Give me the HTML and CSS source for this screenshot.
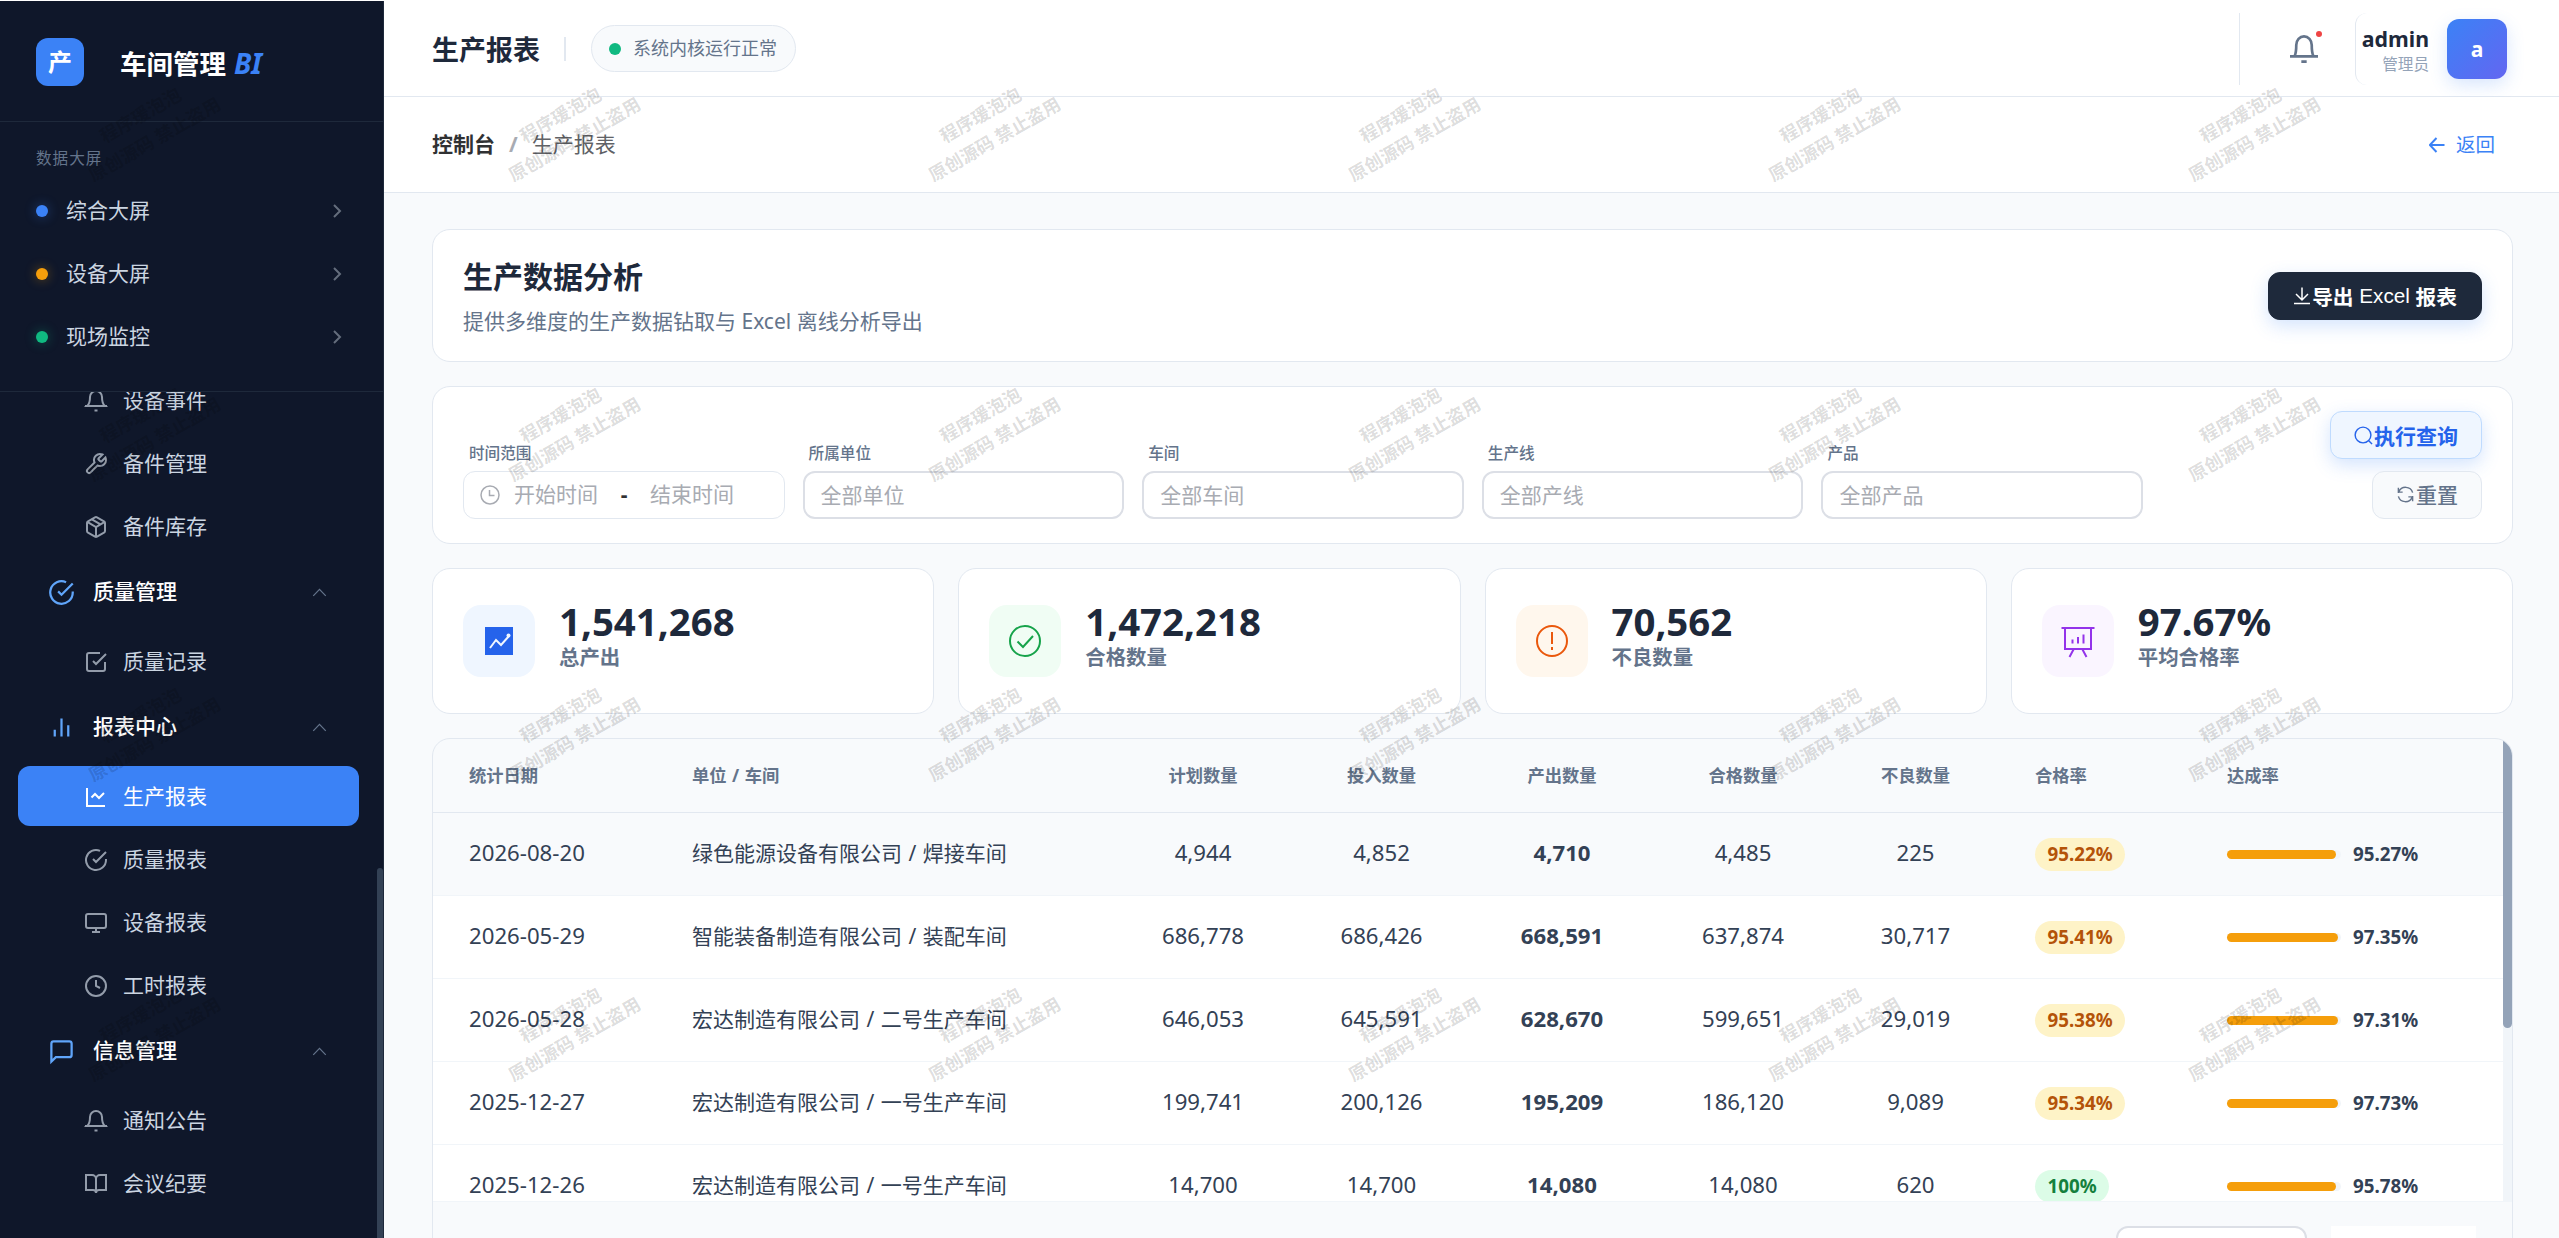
FILE: index.html
```html
<!DOCTYPE html>
<html lang="zh-CN">
<head>
    <meta charset="UTF-8">
    <meta name="viewport" content="width=device-width, initial-scale=1.0">
    <title>生产报表 - 车间管理 BI</title>
    <link rel="stylesheet" href="styles.css">
</head>
<body>
    <!-- icon sprite -->
    <svg class="sprite" width="0" height="0">
        <symbol id="i-bell" viewBox="0 0 24 24"><path d="M18 8A6 6 0 0 0 6 8c0 7-3 9-3 9h18s-3-2-3-9"/><path d="M1 17h22M10.500 21.500h3"/></symbol>
        <symbol id="i-bell2" viewBox="0 0 24 24"><path d="M1.500 17.500h21M5 17.200c1.200-2.500 1.200-5 1.200-8.200a5.800 6.500 0 0 1 11.600 0c0 3.200 0 5.700 1.200 8.200M10 21.500h4"/></symbol>
        <symbol id="i-wrench" viewBox="0 0 24 24"><path d="M14.7 6.300a1 1 0 0 0 0 1.400l1.600 1.600a1 1 0 0 0 1.400 0l3.770-3.770a6 6 0 0 1-7.940 7.940l-6.910 6.910a2.120 2.120 0 0 1-3-3l6.910-6.910a6 6 0 0 1 7.940-7.940l-3.760 3.760z"/></symbol>
        <symbol id="i-box" viewBox="0 0 24 24"><path d="M21 16V8a2 2 0 0 0-1-1.730l-7-4a2 2 0 0 0-2 0l-7 4A2 2 0 0 0 3 8v8a2 2 0 0 0 1 1.730l7 4a2 2 0 0 0 2 0l7-4A2 2 0 0 0 21 16z"/><path d="M16.500 9.400l-9-5.190M3.270 6.960L12 12.010l8.730-5.050M12 22.080V12"/></symbol>
        <symbol id="i-check-circle" viewBox="0 0 24 24"><path d="M22 11.080V12a10 10 0 1 1-5.930-9.140"/><path d="M22 4L12 14.010l-3-3"/></symbol>
        <symbol id="i-check-square" viewBox="0 0 24 24"><path d="M9 11l3 3L22 4"/><path d="M21 12v7a2 2 0 0 1-2 2H5a2 2 0 0 1-2-2V5a2 2 0 0 1 2-2h11"/></symbol>
        <symbol id="i-bars" viewBox="0 0 24 24"><path d="M18 20V10M12 20V4M6 20v-6"/></symbol>
        <symbol id="i-line" viewBox="0 0 24 24"><path d="M3 3v18h18"/><path d="M7.500 12.500l3.500-3.500 4 4 5-5"/></symbol>
        <symbol id="i-monitor" viewBox="0 0 24 24"><rect x="2" y="3" width="20" height="14" rx="2"/><path d="M8 21h8M12 17v4"/></symbol>
        <symbol id="i-clock" viewBox="0 0 24 24"><circle cx="12" cy="12" r="10"/><path d="M12 6v6l4 2"/></symbol>
        <symbol id="i-message" viewBox="0 0 24 24"><path d="M21 15a2 2 0 0 1-2 2H7l-4 4V5a2 2 0 0 1 2-2h14a2 2 0 0 1 2 2z"/></symbol>
        <symbol id="i-book" viewBox="0 0 24 24"><path d="M2 3h6a4 4 0 0 1 4 4v14a3 3 0 0 0-3-3H2zM22 3h-6a4 4 0 0 0-4 4v14a3 3 0 0 1 3-3h7z"/></symbol>
        <symbol id="i-up" viewBox="0 0 24 24"><path d="M2 17.500L12 7l10 10.500"/></symbol>
        <symbol id="i-right" viewBox="0 0 24 24"><path d="M9 18l6-6-6-6"/></symbol>
    </svg>

    <div class="layout">
        <aside class="sidebar">
            <div class="brand">
                <div class="brand-logo">产</div>
                <div class="brand-name">车间管理 <em>BI</em></div>
            </div>
            <div class="screens">
                <div class="screens-label">数据大屏</div>
                <a class="screen-item"><i class="dot blue"></i>综合大屏<svg class="icon arrow"><use href="#i-right"/></svg></a>
                <a class="screen-item"><i class="dot orange"></i>设备大屏<svg class="icon arrow"><use href="#i-right"/></svg></a>
                <a class="screen-item"><i class="dot green"></i>现场监控<svg class="icon arrow"><use href="#i-right"/></svg></a>
            </div>
            <nav class="menu">
                <div class="menu-list">
                    <a class="menu-item"><svg class="icon"><use href="#i-bell"/></svg>设备事件</a>
                    <a class="menu-item"><svg class="icon"><use href="#i-wrench"/></svg>备件管理</a>
                    <a class="menu-item"><svg class="icon"><use href="#i-box"/></svg>备件库存</a>
                    <div class="menu-group"><svg class="icon"><use href="#i-check-circle"/></svg>质量管理<svg class="icon up"><use href="#i-up"/></svg></div>
                    <a class="menu-item"><svg class="icon"><use href="#i-check-square"/></svg>质量记录</a>
                    <div class="menu-group"><svg class="icon"><use href="#i-bars"/></svg>报表中心<svg class="icon up"><use href="#i-up"/></svg></div>
                    <a class="menu-item active"><svg class="icon"><use href="#i-line"/></svg>生产报表</a>
                    <a class="menu-item"><svg class="icon"><use href="#i-check-circle"/></svg>质量报表</a>
                    <a class="menu-item"><svg class="icon"><use href="#i-monitor"/></svg>设备报表</a>
                    <a class="menu-item"><svg class="icon"><use href="#i-clock"/></svg>工时报表</a>
                    <div class="menu-group"><svg class="icon"><use href="#i-message"/></svg>信息管理<svg class="icon up"><use href="#i-up"/></svg></div>
                    <a class="menu-item"><svg class="icon"><use href="#i-bell"/></svg>通知公告</a>
                    <a class="menu-item"><svg class="icon"><use href="#i-book"/></svg>会议纪要</a>
                </div>
                <div class="menu-scroll"></div>
            </nav>
        </aside>

        <main class="main">
            <header class="header">
                <h1 class="header-title">生产报表</h1>
                <span class="header-line"></span>
                <div class="status"><i class="status-dot"></i>系统内核运行正常</div>
                <div class="header-right">
                    <div class="notice">
                        <svg class="icon"><use href="#i-bell2"/></svg>
                        <i class="notice-dot"></i>
                    </div>
                    <div class="user">
                        <div class="user-info">
                            <div class="user-name">admin</div>
                            <div class="user-role">管理员</div>
                        </div>
                        <div class="avatar">a</div>
                    </div>
                </div>
            </header>

            <div class="crumbs">
                <b>控制台</b><span class="slash">/</span><span class="current">生产报表</span>
                <a class="back">
                    <svg class="icon" viewBox="0 0 16 16"><path d="M15.500 8H1M7.500 1L.8 8l6.700 7"/></svg>返回
                </a>
            </div>

            <div class="content">
                <section class="card intro">
                    <div>
                        <h2>生产数据分析</h2>
                        <p>提供多维度的生产数据钻取与 Excel 离线分析导出</p>
                    </div>
                    <button class="btn btn-dark">
                        <svg class="icon" viewBox="0 0 18 18"><path d="M9 1v12M3 7.500l6 6 6-6M1 17h16"/></svg>导出&nbsp;<span>Excel</span>&nbsp;报表
                    </button>
                </section>

                <section class="card filters">
                    <div class="fields">
                        <div class="field">
                            <label>时间范围</label>
                            <div class="control range">
                                <svg class="icon" viewBox="0 0 20 20"><circle cx="10" cy="10" r="9"/><path d="M9.500 5v5.500h5"/></svg>
                                <span>开始时间</span><b>-</b><span>结束时间</span>
                            </div>
                        </div>
                        <div class="field">
                            <label>所属单位</label>
                            <div class="control select">全部单位</div>
                        </div>
                        <div class="field">
                            <label>车间</label>
                            <div class="control select">全部车间</div>
                        </div>
                        <div class="field">
                            <label>生产线</label>
                            <div class="control select">全部产线</div>
                        </div>
                        <div class="field">
                            <label>产品</label>
                            <div class="control select">全部产品</div>
                        </div>
                    </div>
                    <div class="actions">
                        <button class="btn btn-query"><svg class="icon" viewBox="0 0 20 20"><circle cx="9.500" cy="9.500" r="8.300"/><path d="M15.500 15.500l3.500 3.500"/></svg>执行查询</button>
                        <button class="btn btn-reset"><svg class="icon" viewBox="0 0 20 20"><path d="M2.500 8.500V3M2.500 7.500H7M3 7.200A7.700 7.700 0 0 1 17.500 8M17.500 11.500V17M17.500 12.500H13M17 12.800A7.700 7.700 0 0 1 2.500 12"/></svg>重置</button>
                    </div>
                </section>

                <section class="stats">
                    <div class="card stat">
                        <div class="stat-icon blue"><svg class="icon" viewBox="0 0 36 36"><rect class="solid" x="4" y="4" width="28" height="28"/><path class="white" d="M9 25l6-8 5 5 8-9"/><circle class="dot-white" cx="27.500" cy="12.500" r="2"/></svg></div>
                        <div class="stat-text"><div class="stat-value">1,541,268</div><div class="stat-label">总产出</div></div>
                    </div>
                    <div class="card stat">
                        <div class="stat-icon green"><svg class="icon" viewBox="0 0 36 36"><circle cx="18" cy="18" r="15"/><path d="M10.500 18.500l5.500 5.500 10-11"/></svg></div>
                        <div class="stat-text"><div class="stat-value">1,472,218</div><div class="stat-label">合格数量</div></div>
                    </div>
                    <div class="card stat">
                        <div class="stat-icon orange"><svg class="icon" viewBox="0 0 36 36"><circle cx="18" cy="18" r="15"/><path d="M18 9v12M18 24v3"/></svg></div>
                        <div class="stat-text"><div class="stat-value">70,562</div><div class="stat-label">不良数量</div></div>
                    </div>
                    <div class="card stat">
                        <div class="stat-icon purple"><svg class="icon" viewBox="0 0 36 36"><path d="M1.500 5h33M5 5v21h26V5M13.500 26.500l-4 7.500M22.500 26.500l4 7.500M12.500 16.500v4M18 14v6.500M23.500 11.500v9"/></svg></div>
                        <div class="stat-text"><div class="stat-value">97.67%</div><div class="stat-label">平均合格率</div></div>
                    </div>
                </section>

                <section class="card report">
                    <div class="report-body">
                        <table>
                            <colgroup>
                                <col class="c-date"><col class="c-unit"><col class="c-plan"><col class="c-input"><col class="c-output"><col class="c-pass"><col class="c-bad"><col class="c-rate"><col>
                            </colgroup>
                            <thead>
                                <tr><th>统计日期</th><th>单位 / 车间</th><th class="num">计划数量</th><th class="num">投入数量</th><th class="num">产出数量</th><th class="num">合格数量</th><th class="num">不良数量</th><th>合格率</th><th>达成率</th></tr>
                            </thead>
                            <tbody>
                                <tr class="hover">
                                    <td class="date">2026-08-20</td><td>绿色能源设备有限公司 / 焊接车间</td>
                                    <td class="num">4,944</td><td class="num">4,852</td><td class="num strong">4,710</td><td class="num">4,485</td><td class="num">225</td>
                                    <td><span class="badge warn">95.22%</span></td>
                                    <td><div class="progress"><div class="track"><i style="width: 95.27%"></i></div>95.27%</div></td>
                                </tr>
                                <tr>
                                    <td class="date">2026-05-29</td><td>智能装备制造有限公司 / 装配车间</td>
                                    <td class="num">686,778</td><td class="num">686,426</td><td class="num strong">668,591</td><td class="num">637,874</td><td class="num">30,717</td>
                                    <td><span class="badge warn">95.41%</span></td>
                                    <td><div class="progress"><div class="track"><i style="width: 97.35%"></i></div>97.35%</div></td>
                                </tr>
                                <tr>
                                    <td class="date">2026-05-28</td><td>宏达制造有限公司 / 二号生产车间</td>
                                    <td class="num">646,053</td><td class="num">645,591</td><td class="num strong">628,670</td><td class="num">599,651</td><td class="num">29,019</td>
                                    <td><span class="badge warn">95.38%</span></td>
                                    <td><div class="progress"><div class="track"><i style="width: 97.31%"></i></div>97.31%</div></td>
                                </tr>
                                <tr>
                                    <td class="date">2025-12-27</td><td>宏达制造有限公司 / 一号生产车间</td>
                                    <td class="num">199,741</td><td class="num">200,126</td><td class="num strong">195,209</td><td class="num">186,120</td><td class="num">9,089</td>
                                    <td><span class="badge warn">95.34%</span></td>
                                    <td><div class="progress"><div class="track"><i style="width: 97.73%"></i></div>97.73%</div></td>
                                </tr>
                                <tr>
                                    <td class="date">2025-12-26</td><td>宏达制造有限公司 / 一号生产车间</td>
                                    <td class="num">14,700</td><td class="num">14,700</td><td class="num strong">14,080</td><td class="num">14,080</td><td class="num">620</td>
                                    <td><span class="badge ok">100%</span></td>
                                    <td><div class="progress"><div class="track"><i style="width: 95.78%"></i></div>95.78%</div></td>
                                </tr>
                            </tbody>
                        </table>
                        <div class="report-scroll"><i></i></div>
                    </div>
                    <div class="pager">
                        <div class="page-size"></div>
                        <div class="page-nav"></div>
                    </div>
                </section>
            </div>
        </main>
    </div>

    <div class="watermark" id="watermark"></div>

    <script>
        const layer = document.getElementById('watermark');
        for (let i = 0; i < 24; i++) {
            const cell = document.createElement('div');
            cell.className = 'watermark-cell';
            cell.innerHTML = '<p>程序瑗泡泡<br>原创源码 禁止盗用</p>';
            layer.appendChild(cell);
        }
    </script>
</body>
</html>
```
FILE: styles.css
```css
* {
    box-sizing: border-box;
}
body {
    margin: 0;
    padding-top: 1px;
    height: 1238px;
    overflow: hidden;
    position: relative;
    background: #fff;
    font-family: "Noto Sans", "Noto Sans CJK SC", sans-serif;
    font-size: 21px;
    line-height: 1.5;
    color: #334155;
}
h1, h2, p {
    margin: 0;
}
.sprite {
    position: absolute;
}
.icon {
    fill: none;
    stroke: currentColor;
    stroke-width: 2;
    flex-shrink: 0;
}
.layout {
    display: flex;
    height: 1237px;
}

/* sidebar */
.sidebar {
    width: 384px;
    flex-shrink: 0;
    display: flex;
    flex-direction: column;
    background: #0f172a;
    border-right: 1px solid #1e293b;
}
.brand {
    height: 121px;
    padding: 1px 36px 0;
    display: flex;
    align-items: center;
    gap: 36px;
    border-bottom: 1px solid #1e293b;
}
.brand-logo {
    width: 48px;
    height: 48px;
    border-radius: 12px;
    background: #3b82f6;
    color: #fff;
    font-size: 24px;
    font-weight: 700;
    text-align: center;
    line-height: 48px;
}
.brand-name {
    padding-top: 3px;
    color: #fff;
    font-size: 26.500px;
    font-weight: 700;
    white-space: nowrap;
}
.brand-name em {
    margin-left: 1px;
    font-size: 28px;
    color: #3b82f6;
}
.screens {
    height: 270px;
    padding-top: 24px;
    border-bottom: 1px solid #1e293b;
}
.screens-label {
    height: 33px;
    padding-left: 36px;
    font-size: 15.600px;
    line-height: 25px;
    letter-spacing: 1px;
    color: #64748b;
}
.screen-item {
    height: 63px;
    padding: 1px 34px 0 36px;
    display: flex;
    align-items: center;
    color: #cbd5e1;
}
.screen-item .arrow {
    width: 24px;
    height: 24px;
    margin-left: auto;
    opacity: .45;
}
.dot {
    width: 12px;
    height: 12px;
    border-radius: 50%;
    margin-right: 18px;
}
.dot.blue {
    background: #3b82f6;
    box-shadow: 0 0 12px rgba(59, 130, 246, .4);
}
.dot.orange {
    background: #f59e0b;
    box-shadow: 0 0 12px rgba(245, 158, 11, .4);
}
.dot.green {
    background: #10b981;
    box-shadow: 0 0 12px rgba(16, 185, 129, .4);
}
.menu {
    flex: 1;
    min-height: 0;
    overflow: hidden;
    display: flex;
    justify-content: space-between;
}
.menu-list {
    width: 359px;
    margin-top: -22px;
    padding-left: 18px;
}
.menu-item {
    height: 60px;
    margin-bottom: 3px;
    padding-top: 1px;
    padding-left: 66px;
    display: flex;
    align-items: center;
    gap: 15px;
    border-radius: 12px;
    color: #cbd5e1;
}
.menu-item .icon {
    width: 24px;
    height: 24px;
    opacity: .7;
}
.menu-item.active {
    background: #3b82f6;
    color: #fff;
}
.menu-item.active .icon {
    opacity: 1;
}
.menu-group {
    height: 66px;
    margin-bottom: 6px;
    padding: 0 32px 0 30px;
    display: flex;
    align-items: center;
    gap: 18px;
    color: #fff;
    font-weight: 500;
}
.menu-group .icon {
    width: 27px;
    height: 27px;
    color: #60a5fa;
}
.menu-group .icon.up {
    width: 15px;
    height: 15px;
    margin-left: auto;
    color: #64748b;
}
.menu-scroll {
    width: 6px;
    margin-top: 476px;
    border-radius: 3px 3px 0 0;
    background: #334155;
}

/* header */
.main {
    flex: 1;
    min-width: 0;
    display: flex;
    flex-direction: column;
    background: #f8fafc;
}
.header {
    height: 96px;
    flex-shrink: 0;
    padding: 0 47px 0 48px;
    display: flex;
    align-items: center;
    background: #fff;
    border-bottom: 1px solid #e2e8f0;
}
.header-title {
    padding-top: 3px;
    font-size: 27px;
    font-weight: 700;
    color: #1e293b;
}
.header-line {
    width: 2px;
    height: 24px;
    margin: 0 25px 0 24px;
    background: #e2e8f0;
}
.status {
    height: 47px;
    padding: 0 18px 0 17px;
    display: flex;
    align-items: center;
    gap: 12px;
    border: 1px solid #e2e8f0;
    border-radius: 24px;
    background: #f8fafc;
    color: #64748b;
    font-size: 18px;
}
.status-dot {
    width: 12px;
    height: 12px;
    border-radius: 50%;
    background: #10b981;
}
.header-right {
    height: 72px;
    margin-left: auto;
    display: flex;
    border-left: 1px solid #e2e8f0;
}
.notice {
    position: relative;
    width: 115px;
    padding-left: 12px;
    display: flex;
    align-items: center;
    justify-content: center;
    color: #64748b;
}
.notice .icon {
    width: 32px;
    height: 32px;
}
.notice-dot {
    position: absolute;
    top: 18px;
    right: 33px;
    width: 6px;
    height: 6px;
    border-radius: 50%;
    background: #ef4444;
}
.user {
    width: 157px;
    padding-right: 5px;
    display: flex;
    align-items: center;
    justify-content: flex-end;
    gap: 18px;
    border-left: 1px solid #e2e8f0;
    border-radius: 12px;
}
.user-info {
    padding-top: 3px;
    text-align: right;
    line-height: 27px;
}
.user-name {
    font-size: 21.300px;
    font-weight: 700;
    color: #1e293b;
}
.user-role {
    font-size: 15.600px;
    line-height: 24px;
    color: #94a3b8;
}
.avatar {
    width: 60px;
    height: 60px;
    border-radius: 12px;
    background: linear-gradient(135deg, #3b82f6, #6366f1);
    box-shadow: 0 6px 18px rgba(59, 130, 246, .2);
    color: #fff;
    font-weight: 700;
    line-height: 60px;
    text-align: center;
}
.crumbs {
    height: 96px;
    flex-shrink: 0;
    padding: 1px 64px 0 48px;
    display: flex;
    align-items: center;
    background: #fff;
    border-bottom: 1px solid #e2e8f0;
}
.crumbs b {
    color: #303133;
}
.crumbs .slash {
    margin: 0 14px;
    font-weight: 700;
    color: #a8abb2;
}
.crumbs .current {
    color: #606266;
}
.back {
    margin-left: auto;
    display: flex;
    align-items: center;
    gap: 11px;
    font-size: 19.500px;
    color: #3b82f6;
}
.back .icon {
    width: 16px;
    height: 16px;
}

/* content */
.content {
    flex: 1;
    min-height: 0;
    padding: 36px 46px 0 48px;
    display: flex;
    flex-direction: column;
    gap: 24px;
}
.card {
    flex-shrink: 0;
    background: #fff;
    border: 1px solid #e2e8f0;
    border-radius: 18px;
}
.intro {
    height: 133px;
    padding: 0 30px;
    display: flex;
    align-items: center;
    justify-content: space-between;
}
.intro h2 {
    padding-top: 2px;
    font-size: 30px;
    line-height: 45px;
    color: #1e293b;
}
.intro p {
    margin-top: 4px;
    line-height: 36px;
    color: #64748b;
}
.btn {
    height: 48px;
    padding: 0 23px;
    display: flex;
    align-items: center;
    border: 1px solid;
    border-radius: 12px;
    font-family: "Liberation Sans", "Noto Sans CJK SC", sans-serif;
    font-size: 21px;
    font-weight: 700;
    white-space: nowrap;
}
.btn .icon {
    width: 19px;
    height: 19px;
    margin-right: 1px;
    stroke-width: 1.500;
}
.btn-dark {
    padding: 0 24px;
    font-size: 20.700px;
    background: #1e293b;
    border-color: #1e293b;
    color: #fff;
    box-shadow: 0 6px 18px rgba(59, 130, 246, .22);
}
.btn-dark .icon {
    width: 18px;
}
.btn-dark span {
    font-weight: 400;
}
.btn-query {
    background: #eff6ff;
    border-color: #bfdbfe;
    color: #2563eb;
    box-shadow: 0 6px 18px rgba(59, 130, 246, .22);
}
.btn-reset {
    padding-bottom: 2px;
    background: #f8fafc;
    border-color: #e2e8f0;
    color: #64748b;
    font-weight: 500;
}
.filters {
    height: 158px;
    padding: 24px 30px;
    display: flex;
    align-items: flex-end;
    justify-content: space-between;
}
.fields {
    width: 1680px;
    display: grid;
    grid-template-columns: repeat(5, 1fr);
    gap: 18px;
}
.field label {
    display: block;
    height: 30px;
    padding-left: 6px;
    font-size: 15.600px;
    font-weight: 500;
    line-height: 25px;
    color: #64748b;
}
.control {
    height: 48px;
    display: flex;
    align-items: center;
    border-radius: 12px;
    color: #a8abb2;
    background: #fff;
}
.range {
    padding-left: 16px;
    border: 1px solid #e2e8f0;
}
.range .icon {
    width: 20px;
    height: 20px;
    margin-right: 14px;
    stroke-width: 1.500;
}
.range b {
    width: 52px;
    text-align: center;
    color: #303133;
}
.select {
    padding-top: 1px;
    padding-left: 16px;
    border: 2px solid #dcdfe6;
}
.actions {
    display: flex;
    flex-direction: column;
    align-items: flex-end;
    gap: 12px;
}
.stats {
    display: grid;
    grid-template-columns: repeat(4, 1fr);
    gap: 24px;
}
.stat {
    height: 146px;
    padding: 0 30px;
    display: flex;
    align-items: center;
    gap: 24px;
}
.stat-text {
    padding-bottom: 11px;
}
.stat-icon {
    width: 72px;
    height: 72px;
    display: flex;
    align-items: center;
    justify-content: center;
    border-radius: 18px;
}
.stat-icon .icon {
    width: 36px;
    height: 36px;
}
.stat-icon.blue {
    background: #eff6ff;
    color: #2563eb;
}
.stat-icon.green {
    background: #f0fdf4;
    color: #16a34a;
}
.stat-icon.orange {
    background: #fff7ed;
    color: #ea580c;
}
.stat-icon.purple {
    background: #faf5ff;
    color: #9333ea;
}
.stat-icon .solid {
    fill: #2563eb;
    stroke: none;
}
.stat-icon .white {
    stroke: #eff6ff;
}
.stat-icon .dot-white {
    fill: #eff6ff;
    stroke: none;
}
.stat-value {
    font-size: 38.400px;
    font-weight: 700;
    line-height: 42px;
    color: #1e293b;
}
.stat-label {
    font-size: 20.400px;
    font-weight: 700;
    line-height: 30px;
    color: #64748b;
}

/* table */
.report {
    height: 560px;
    overflow: hidden;
    background: #f8fafc;
}
.report-body {
    height: 463px;
    overflow: hidden;
    display: flex;
    border-bottom: 1px solid #f1f5f9;
}
table {
    width: 2070px;
    flex-shrink: 0;
    table-layout: fixed;
    border-collapse: separate;
    border-spacing: 0;
}
.c-date {
    width: 223px;
}
.c-unit {
    width: 457px;
}
.c-plan {
    width: 180px;
}
.c-input {
    width: 177px;
}
.c-output {
    width: 184px;
}
.c-pass {
    width: 178px;
}
.c-bad {
    width: 167px;
}
.c-rate {
    width: 192px;
}
th {
    height: 74px;
    padding: 0 0 0 36px;
    border-bottom: 1px solid #e2e8f0;
    font-size: 17.300px;
    text-align: left;
    word-spacing: 1px;
    color: #64748b;
}
td {
    height: 83px;
    padding: 0 0 0 36px;
    border-bottom: 1px solid #f1f5f9;
    background: #fff;
    white-space: nowrap;
    word-spacing: 1px;
}
.hover td {
    background: #f8fafc;
}
th.num, td.num {
    padding: 0;
    text-align: center;
}
td.num, td.date {
    padding-bottom: 2px;
    font-size: 22.200px;
}
td.strong {
    font-weight: 700;
}
.badge {
    display: inline-block;
    padding: 0 12.500px;
    border-radius: 17px;
    font-size: 18.800px;
    font-weight: 700;
    line-height: 33px;
}
.badge.warn {
    background: #fef3c7;
    color: #b45309;
}
.badge.ok {
    background: #dcfce7;
    color: #15803d;
}
.progress {
    display: flex;
    align-items: center;
    gap: 12px;
    font-size: 18.800px;
    font-weight: 700;
}
.track {
    width: 114px;
    height: 9px;
    border-radius: 5px;
    background: #f1f5f9;
}
.track i {
    display: block;
    height: 9px;
    border-radius: 5px;
    background: #f59e0b;
}
.report-scroll {
    width: 9px;
    background: #f1f5f9;
}
.report-scroll i {
    display: block;
    height: 289px;
    border-radius: 0 0 5px 5px;
    background: #94a3b8;
}
.pager {
    padding: 24px 36px 0 0;
    display: flex;
    justify-content: flex-end;
    gap: 24px;
}
.page-size {
    width: 191px;
    height: 48px;
    border: 2px solid #dcdfe6;
    border-radius: 12px;
    background: #fff;
}
.page-nav {
    width: 145px;
    height: 48px;
    background: #fff;
}

/* watermark */
.watermark {
    position: absolute;
    top: -23px;
    left: -63px;
    display: grid;
    grid-template-columns: repeat(6, 420px);
    grid-auto-rows: 300px;
    pointer-events: none;
}
.watermark-cell {
    display: flex;
    align-items: center;
    justify-content: center;
    color: rgba(0, 0, 0, .15);
    font-size: 18px;
    font-weight: 700;
    line-height: 28px;
    text-align: center;
}
.watermark-cell p {
    transform: rotate(-30deg);
}
```
